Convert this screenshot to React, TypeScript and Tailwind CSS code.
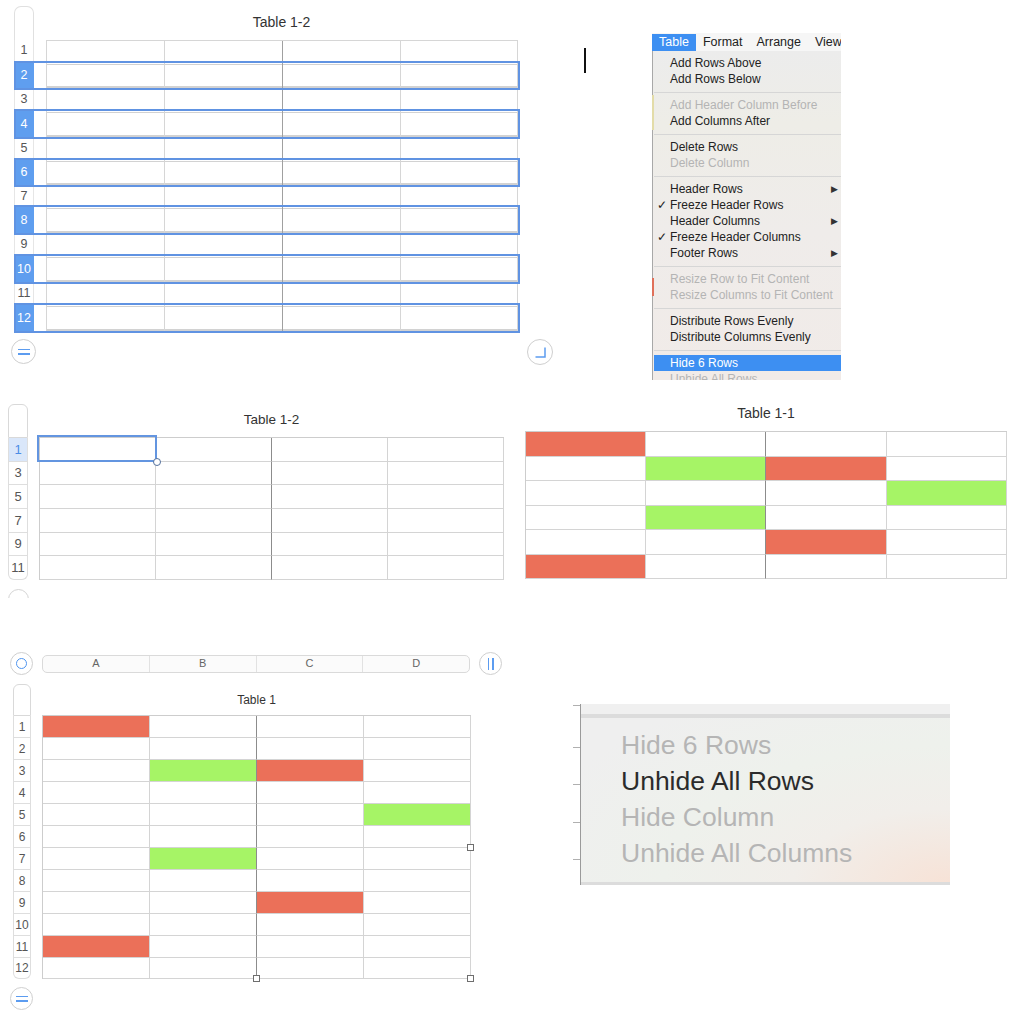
import React from 'react';

type Cell = 'w' | 'r' | 'g';

const fill: Record<Cell, string> = {
  w: 'bg-white',
  r: 'bg-[#eb7059]',
  g: 'bg-[#a6f466]',
};

// shared spreadsheet grid, column 2 carries the darker split line
const Grid = ({ rows, widths, heights, sel = false }: { rows: Cell[][]; widths: string[]; heights: string[]; sel?: boolean }) => (
  <div className="w-fit border-l border-t border-[#cdcdcd]">
    {rows.map((row, i) => (
      <div key={i} className={`flex ${heights[i]}`}>
        {row.map((c, j) => (
          <div key={j} className={`relative ${widths[j]} border-b border-r border-[#d4d4d4] ${j === 1 ? 'border-r-[#8c8c8c]' : ''} ${fill[c]}`}>
            {sel && i === 0 && j === 0 && (
              <div className="absolute -left-[3px] -top-[3px] z-10 h-[27px] w-[120px] border-2 border-[#6395e0]">
                <div className="absolute -bottom-[6px] -right-[6px] h-[8px] w-[8px] rounded-full border-[1.5px] border-[#53709c] bg-white" />
              </div>
            )}
          </div>
        ))}
      </div>
    ))}
  </div>
);

const RowHeads = ({ labels, heights, top, w, text, active = -1 }: { labels: number[]; heights: string[]; top: string; w: string; text: string; active?: number }) => (
  <div className={`flex ${w} flex-col`}>
    <div className={`${top} rounded-t-[6px] border border-[#d9d9d9]`} />
    {labels.map((n, i) => (
      <div
        key={n}
        className={`${heights[i]} flex items-center justify-center border-x border-b border-[#dedede] ${text} ${i === active ? 'bg-[#dae7fa] text-[#4b8de6]' : 'text-[#555]'} ${i === labels.length - 1 ? 'rounded-b-[6px]' : ''}`}
      >
        {n}
      </div>
    ))}
  </div>
);

const CircleBtn = ({ size, children }: { size: string; children?: React.ReactNode }) => (
  <div className={`${size} flex shrink-0 items-center justify-center rounded-full border border-[#cfcfcf] bg-white`}>{children}</div>
);

const EqualsIcon = () => (
  <div className="flex flex-col gap-[3px]">
    <div className="h-[1.5px] w-[12px] bg-[#5c9cf0]" />
    <div className="h-[1.5px] w-[12px] bg-[#5c9cf0]" />
  </div>
);

const CornerIcon = () => (
  <svg width="13" height="13" viewBox="0 0 13 13">
    <path d="M11 1.5 V11 H1.5" fill="none" stroke="#5c9cf0" strokeWidth="1.5" />
  </svg>
);

const PauseIcon = () => (
  <div className="flex gap-[3px]">
    <div className="h-[12px] w-[1.5px] bg-[#5c9cf0]" />
    <div className="h-[12px] w-[1.5px] bg-[#5c9cf0]" />
  </div>
);

// Table 1-2 with every other row selected
const topRows = [
  { n: 1, h: 'h-[21px]', sel: false },
  { n: 2, h: 'h-[29px]', sel: true },
  { n: 3, h: 'h-[19px]', sel: false },
  { n: 4, h: 'h-[30px]', sel: true },
  { n: 5, h: 'h-[19px]', sel: false },
  { n: 6, h: 'h-[29px]', sel: true },
  { n: 7, h: 'h-[18px]', sel: false },
  { n: 8, h: 'h-[30px]', sel: true },
  { n: 9, h: 'h-[19px]', sel: false },
  { n: 10, h: 'h-[30px]', sel: true },
  { n: 11, h: 'h-[19px]', sel: false },
  { n: 12, h: 'h-[30px]', sel: true },
];
const topCols = ['w-[118px]', 'w-[118px]', 'w-[118px]', 'w-[117px]'];

const SelectedRowsTable = () => (
  <div className="h-[380px] w-[584px] shrink-0 pl-[11px] pt-[6px]">
    <div className="pl-[3px]">
      <div className="flex">
        <div className="h-[34px] w-[20px] rounded-t-[7px] border border-b-0 border-[#e0e0e0]" />
        <div className="ml-[12px] w-[471px] pt-[9px] text-center text-[14px] leading-none text-[#333]">Table 1-2</div>
      </div>
      {topRows.map((r, i) => (
        <div key={r.n} className={`relative flex ${r.h}`}>
          <div className={`flex w-[20px] items-center justify-center text-[12.5px] ${r.sel ? 'bg-[#5f9eef] text-white' : 'border-x border-[#e6e6e6] text-[#555]'}`}>{r.n}</div>
          <div className={`ml-[12px] flex border-l border-[#d6d6d6] ${i === 0 ? 'border-t' : ''}`}>
            {topCols.map((w, j) => (
              <div key={j} className={`${w} border-r ${j === 1 ? 'border-[#a0a0a0]' : 'border-[#d6d6d6]'}`}>
                {r.sel && <div className="mb-[2px] mt-[3px] h-[calc(100%-5px)] border-b-2 border-t border-[#d2d2d2]" />}
              </div>
            ))}
          </div>
          {r.sel && <div className="absolute inset-y-0 left-0 w-[506px] border-2 border-[#6093e2]" />}
        </div>
      ))}
    </div>
    <div className="mt-[6px] flex w-[542px] justify-between">
      <CircleBtn size="h-[25px] w-[25px]">
        <EqualsIcon />
      </CircleBtn>
      <CircleBtn size="h-[26px] w-[26px]">
        <CornerIcon />
      </CircleBtn>
    </div>
  </div>
);

type MenuItem = { label: string; off?: boolean; check?: boolean; sub?: boolean; hot?: boolean } | 'sep';

const menuItems: MenuItem[] = [
  { label: 'Add Rows Above' },
  { label: 'Add Rows Below' },
  'sep',
  { label: 'Add Header Column Before', off: true },
  { label: 'Add Columns After' },
  'sep',
  { label: 'Delete Rows' },
  { label: 'Delete Column', off: true },
  'sep',
  { label: 'Header Rows', sub: true },
  { label: 'Freeze Header Rows', check: true },
  { label: 'Header Columns', sub: true },
  { label: 'Freeze Header Columns', check: true },
  { label: 'Footer Rows', sub: true },
  'sep',
  { label: 'Resize Row to Fit Content', off: true },
  { label: 'Resize Columns to Fit Content', off: true },
  'sep',
  { label: 'Distribute Rows Evenly' },
  { label: 'Distribute Columns Evenly' },
  'sep',
  { label: 'Hide 6 Rows', hot: true },
  { label: 'Unhide All Rows', off: true },
];

const TableMenu = () => (
  <div className="ml-[66px] mt-[33px] h-[347px] w-[189px] overflow-hidden text-[12px] leading-none">
    <div className="flex h-[18px] items-center whitespace-nowrap bg-[#f6f6f6] pt-px text-[12.5px] text-[#222]">
      <div className="flex h-full items-center bg-[#3d8ff2] px-[7px] text-white">Table</div>
      <div className="px-[7px]">Format</div>
      <div className="px-[7px]">Arrange</div>
      <div className="px-[7px]">View</div>
    </div>
    <div className="flex h-[329px] bg-[linear-gradient(180deg,#ececec_0%,#eeede7_22%,#efecea_55%,#f1ebe8_100%)]">
      <div className="flex w-[2px] flex-col">
        <div className="h-[44px] w-px bg-[#a8a8a8]" />
        <div className="h-[35px] w-[2px] bg-[#e3dca8]" />
        <div className="h-[148px] w-px bg-[#a8a8a8]" />
        <div className="h-[18px] w-[2px] bg-[#e0705a]" />
        <div className="w-px flex-1 bg-[#a8a8a8]" />
      </div>
      <div className="flex-1 pt-[4px]">
        {menuItems.map((m, i) =>
          m === 'sep' ? (
            <div key={i} className="flex h-[10px] items-center">
              <div className="h-px w-full bg-[#d6d6d6]" />
            </div>
          ) : (
            <div
              key={i}
              className={`flex h-[16px] items-center whitespace-nowrap ${m.hot ? 'bg-[#3d8ff2] text-white' : m.off ? 'text-[#b4b4b4]' : 'text-[#222]'}`}
            >
              <span className="w-[16px] pl-[3px] text-[12px]">{m.check ? '✓' : ''}</span>
              <span className="flex-1">{m.label}</span>
              {m.sub && <span className="pr-[3px] text-[9px] text-[#333]">▶</span>}
            </div>
          ),
        )}
      </div>
    </div>
  </div>
);

// Table 1-2 after the even rows are hidden
const compactRows: Cell[][] = Array.from({ length: 6 }, () => ['w', 'w', 'w', 'w']);
const compactHeights = ['h-[24px]', 'h-[23px]', 'h-[24px]', 'h-[24px]', 'h-[23px]', 'h-[24px]'];

const CompactTable = () => (
  <div className="h-[198px] w-[510px] shrink-0 overflow-hidden pl-[8px] pt-[4px]">
    <div className="flex">
      <RowHeads labels={[1, 3, 5, 7, 9, 11]} heights={compactHeights} top="h-[34px]" w="w-[20px]" text="text-[13px]" active={0} />
      <div className="ml-[11px] flex flex-col">
        <div className="h-[33px] pt-[9px] text-center text-[13.5px] leading-none text-[#333]">Table 1-2</div>
        <Grid rows={compactRows} widths={['w-[116px]', 'w-[116px]', 'w-[116px]', 'w-[116px]']} heights={compactHeights} sel />
      </div>
    </div>
    <div className="mt-[9px] h-[22px] w-[21px] rounded-full border border-[#d4d4d4]" />
  </div>
);

const sixRows: Cell[][] = [
  ['r', 'w', 'w', 'w'],
  ['w', 'g', 'r', 'w'],
  ['w', 'w', 'w', 'g'],
  ['w', 'g', 'w', 'w'],
  ['w', 'w', 'r', 'w'],
  ['r', 'w', 'w', 'w'],
];

const ColoredTable = () => (
  <div className="h-[198px] w-[514px] overflow-hidden pl-[15px]">
    <div className="h-[31px] w-[482px] pt-[6px] text-center text-[14px] leading-none text-[#333]">Table 1-1</div>
    <Grid
      rows={sixRows}
      widths={['w-[120px]', 'w-[120px]', 'w-[121px]', 'w-[120px]']}
      heights={['h-[25px]', 'h-[24px]', 'h-[25px]', 'h-[24px]', 'h-[25px]', 'h-[24px]']}
    />
  </div>
);

const twelveRows: Cell[][] = [
  ['r', 'w', 'w', 'w'],
  ['w', 'w', 'w', 'w'],
  ['w', 'g', 'r', 'w'],
  ['w', 'w', 'w', 'w'],
  ['w', 'w', 'w', 'g'],
  ['w', 'w', 'w', 'w'],
  ['w', 'g', 'w', 'w'],
  ['w', 'w', 'w', 'w'],
  ['w', 'w', 'r', 'w'],
  ['w', 'w', 'w', 'w'],
  ['r', 'w', 'w', 'w'],
  ['w', 'w', 'w', 'w'],
];
const twelveHeights = [...Array.from({ length: 11 }, () => 'h-[22px]'), 'h-[21px]'];

const FullTable = () => (
  <div className="h-[373px] w-[510px] shrink-0 overflow-hidden pt-[12px]">
    <div className="flex items-center pl-[10px]">
      <CircleBtn size="h-[23px] w-[23px]">
        <div className="h-[11px] w-[11px] rounded-full border-[1.5px] border-[#4f95ef]" />
      </CircleBtn>
      <div className="ml-[9px] flex h-[18px] w-[428px] rounded-[5px] border border-[#dadada] bg-[#fbfbfb] text-[11px] text-[#666]">
        {['A', 'B', 'C', 'D'].map((c, i) => (
          <div key={c} className={`flex flex-1 items-center justify-center ${i < 3 ? 'border-r border-[#e2e2e2]' : ''}`}>{c}</div>
        ))}
      </div>
      <div className="ml-[9px]">
        <CircleBtn size="h-[23px] w-[23px]">
          <PauseIcon />
        </CircleBtn>
      </div>
    </div>
    <div className="mt-[9px] flex pl-[13px]">
      <RowHeads labels={[1, 2, 3, 4, 5, 6, 7, 8, 9, 10, 11, 12]} heights={twelveHeights} top="h-[32px]" w="w-[18px]" text="text-[12px]" />
      <div className="ml-[11px] flex flex-col">
        <div className="h-[31px] pt-[10px] text-center text-[12px] leading-none text-[#333]">Table 1</div>
        <div className="relative">
          <Grid rows={twelveRows} widths={['w-[107px]', 'w-[107px]', 'w-[107px]', 'w-[107px]']} heights={twelveHeights} />
          <div className="absolute left-[211px] top-[260px] z-10 h-[7px] w-[7px] border border-[#6e6e6e] bg-white" />
          <div className="absolute left-[425px] top-[260px] z-10 h-[7px] w-[7px] border border-[#6e6e6e] bg-white" />
          <div className="absolute left-[425px] top-[129px] z-10 h-[7px] w-[7px] border border-[#6e6e6e] bg-white" />
        </div>
      </div>
    </div>
    <div className="ml-[10px] mt-[8px]">
      <CircleBtn size="h-[23px] w-[23px]">
        <EqualsIcon />
      </CircleBtn>
    </div>
  </div>
);

const hideItems = [
  { label: 'Hide 6 Rows', off: true },
  { label: 'Unhide All Rows', off: false },
  { label: 'Hide Column', off: true },
  { label: 'Unhide All Columns', off: true },
];

const MenuDetail = () => (
  <div className="ml-[63px] mt-[64px] flex h-[181px]">
    <div className="flex w-[7px] flex-col">
      <div className="mt-[1px] h-px bg-[#b0b0b0]" />
      <div className="mt-[41px] h-px bg-[#b0b0b0]" />
      <div className="mt-[36px] h-px bg-[#b0b0b0]" />
      <div className="mt-[37px] h-px bg-[#b0b0b0]" />
      <div className="mt-[36px] h-px bg-[#b0b0b0]" />
    </div>
    <div className="h-full w-px bg-[#9a9a9a]" />
    <div className="w-[369px] bg-[radial-gradient(ellipse_at_100%_100%,#f7e2d6_0%,#f1eeea_30%,#eef1ec_55%,#efefef_85%)]">
      <div className="h-[10px] bg-[#f0f0f0]" />
      <div className="h-[4px] bg-[#dcdcdc]" />
      <div className="pl-[40px] pt-[9px]">
        {hideItems.map((m) => (
          <div key={m.label} className={`h-[36px] text-[26.5px] leading-[36px] ${m.off ? 'text-[#b5b5b5]' : 'text-[#2b2b2b]'}`}>{m.label}</div>
        ))}
      </div>
      <div className="mt-[11px] h-[3px] bg-[#dcdcdc]" />
    </div>
  </div>
);

export default function App() {
  return (
    <div className="h-[1013px] w-[1024px] overflow-hidden bg-white font-['Liberation_Sans',Arial,sans-serif] text-[#2b2b2b]">
      <div className="flex h-[380px]">
        <SelectedRowsTable />
        <div className="mt-[48px] h-[25px] w-[2px] shrink-0 bg-[#111]" />
        <TableMenu />
      </div>
      <div className="mt-[20px] flex h-[198px]">
        <CompactTable />
        <ColoredTable />
      </div>
      <div className="mt-[42px] flex">
        <FullTable />
        <MenuDetail />
      </div>
    </div>
  );
}
